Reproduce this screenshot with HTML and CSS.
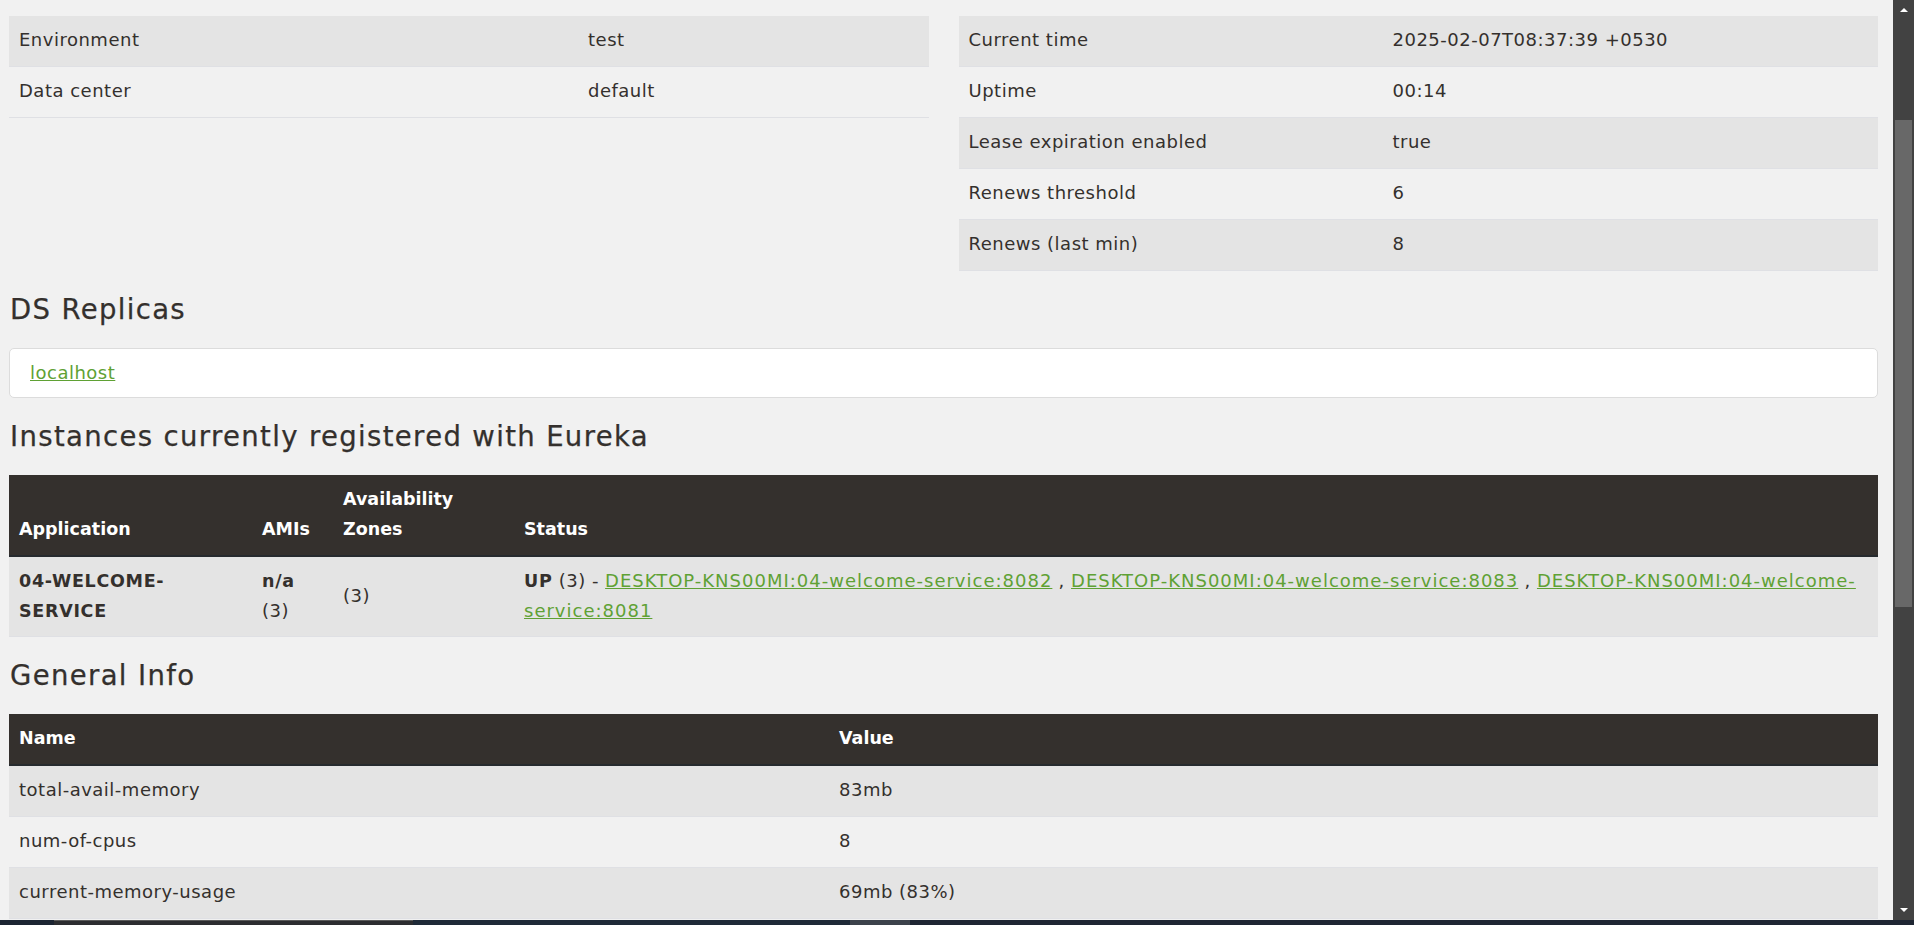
FILE: index.html
```html
<!DOCTYPE html>
<html lang="en">
<head>
<meta charset="utf-8">
<title>Eureka</title>
<link rel="stylesheet" href="styles.css">
</head>
<body>
<div class="screen">
  <div class="window">
    <main class="page">
      <div class="two-col">
        <table class="info left">
          <colgroup><col class="c-left"><col></colgroup>
          <tbody>
            <tr><td>Environment</td><td>test</td></tr>
            <tr><td>Data center</td><td>default</td></tr>
          </tbody>
        </table>
        <table class="info right">
          <colgroup><col class="c-right"><col></colgroup>
          <tbody>
            <tr><td>Current time</td><td>2025-02-07T08:37:39 +0530</td></tr>
            <tr><td>Uptime</td><td>00:14</td></tr>
            <tr><td>Lease expiration enabled</td><td>true</td></tr>
            <tr><td>Renews threshold</td><td>6</td></tr>
            <tr><td>Renews (last min)</td><td>8</td></tr>
          </tbody>
        </table>
      </div>

      <h2 class="section-title">DS Replicas</h2>
      <ul class="list-group">
        <li class="list-item"><a class="link" href="#">localhost</a></li>
      </ul>

      <h2 class="section-title">Instances currently registered with Eureka</h2>
      <table class="info dark">
        <colgroup><col class="c-app"><col class="c-ami"><col class="c-zone"><col></colgroup>
        <thead>
          <tr><th>Application</th><th>AMIs</th><th>Availability Zones</th><th>Status</th></tr>
        </thead>
        <tbody>
          <tr class="instance">
            <td><span class="app-name">04-WELCOME-SERVICE</span></td>
            <td><span class="ami"><b>n/a</b> (3)</span></td>
            <td>(3)</td>
            <td><b>UP</b> (3) - <a class="link wide" href="#">DESKTOP-KNS00MI:04-welcome-service:8082</a> , <a class="link wide" href="#">DESKTOP-KNS00MI:04-welcome-service:8083</a> , <a class="link wide" href="#">DESKTOP-KNS00MI:04-welcome-service:8081</a></td>
          </tr>
        </tbody>
      </table>

      <h2 class="section-title">General Info</h2>
      <table class="info dark">
        <colgroup><col class="c-name"><col></colgroup>
        <thead>
          <tr><th>Name</th><th>Value</th></tr>
        </thead>
        <tbody>
          <tr><td>total-avail-memory</td><td>83mb</td></tr>
          <tr><td>num-of-cpus</td><td>8</td></tr>
          <tr><td>current-memory-usage</td><td>69mb (83%)</td></tr>
        </tbody>
      </table>
    </main>
    <div class="scrollbar">
      <div class="arrow-up"></div>
      <div class="thumb"></div>
      <div class="arrow-down"></div>
    </div>
  </div>
  <div class="taskbar">
    <div class="tb-seg tb-a"></div>
    <div class="tb-seg tb-b"></div>
    <div class="tb-seg tb-c"></div>
    <div class="tb-seg tb-d"></div>
    <div class="tb-seg tb-e"></div>
  </div>
</div>
</body>
</html>
```

FILE: styles.css
```css
html, body {
  margin: 0;
  padding: 0;
  height: 100%;
  overflow: hidden;
}

body {
  font-family: "DejaVu Sans", "Liberation Sans", sans-serif;
  font-size: 18px;
  letter-spacing: 0.5px;
  color: #34302d;
  background: #f1f1f1;
}

.screen {
  display: flex;
  flex-direction: column;
  height: 925px;
}

.window {
  display: flex;
  height: 920px;
}

.page {
  flex: 1;
  min-width: 0;
  overflow: hidden;
  padding: 16px 15px 0 9px;
}

.two-col {
  display: grid;
  grid-template-columns: 1fr 1fr;
  column-gap: 30px;
  align-items: start;
}

table.info {
  width: 100%;
  border-collapse: collapse;
  table-layout: fixed;
}

.c-left { width: 569px; }
.c-right { width: 424px; }
.c-app { width: 243px; }
.c-ami { width: 81px; }
.c-zone { width: 181px; }
.c-name { width: 820px; }

table.info td,
table.info th {
  padding: 9px 10px 11px;
  line-height: 30px;
  text-align: left;
  vertical-align: middle;
}

table.info tbody td {
  border-bottom: 1px solid #dfe0e4;
}

table.info tbody tr.instance td {
  padding-bottom: 10px;
}

table.info tbody tr:nth-child(odd) {
  background: #e4e4e4;
}

table.dark thead th {
  background: #34302d;
  color: #ffffff;
  font-weight: bold;
  font-size: 17.5px;
  letter-spacing: 0;
  vertical-align: bottom;
  border-bottom: 2px solid #262a2e;
}

b, .app-name {
  font-weight: bold;
  font-size: 17.5px;
  letter-spacing: 0.7px;
}

.app-name {
  display: inline-block;
  width: 200px;
}

.ami {
  display: inline-block;
  width: 45px;
}

.section-title {
  font-family: "DejaVu Sans", "Liberation Sans", sans-serif;
  font-size: 27.5px;
  font-weight: normal;
  letter-spacing: 1.35px;
  line-height: 30px;
  margin: 23px 0 24px;
  padding-left: 1px;
  -webkit-text-stroke: 0.25px #34302d;
}

.list-group {
  list-style: none;
  margin: 0;
  padding: 0;
}

.list-item {
  background: #ffffff;
  border: 1px solid #dcdcdc;
  border-radius: 5px;
  padding: 10px 20px;
  line-height: 28px;
}

.link {
  color: #5fa134;
  text-decoration: underline;
}

.link.wide {
  letter-spacing: 1px;
}

.scrollbar {
  width: 21px;
  background: #424242;
  display: flex;
  flex-direction: column;
  align-items: center;
}

.arrow-up {
  width: 0;
  height: 0;
  margin-top: 8px;
  border-left: 4.5px solid transparent;
  border-right: 4.5px solid transparent;
  border-bottom: 4px solid #ffffff;
}

.thumb {
  margin-top: 108px;
  width: 17px;
  height: 487px;
  background: #686868;
}

.arrow-down {
  width: 0;
  height: 0;
  margin-top: auto;
  margin-bottom: 8px;
  border-left: 4.5px solid transparent;
  border-right: 4.5px solid transparent;
  border-top: 4px solid #ffffff;
}

.taskbar {
  display: flex;
  height: 5px;
  background: #1e2836;
}

.tb-seg { height: 5px; }
.tb-a { width: 54px; background: #1c2532; }
.tb-b { width: 359px; background: #2c2d30; border-top: 1px solid #5a5a5a; box-sizing: border-box; }
.tb-c { width: 437px; background: #1f2a38; }
.tb-d { width: 60px; background: #3c424b; }
.tb-e { flex: 1; background: #1f2633; }
```
